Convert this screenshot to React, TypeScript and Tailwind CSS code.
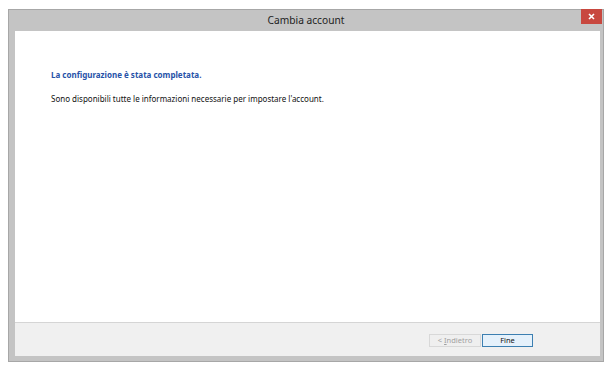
import React from "react";

export default function App() {
  return (
    <div className="w-[609px] h-[366px] bg-white pt-[9px] pl-[8px]" style={{ fontFamily: '"Noto Sans", "Open Sans", sans-serif' }}>
      <div className="w-[596px] h-[353px] border border-[#a7a7a7] bg-[#c4c4c4] flex flex-col">
        <div className="relative h-[21px] flex items-center justify-center shrink-0">
          <span className="text-[10.2px] text-[#222] leading-none">Cambia account</span>
          <div className="absolute right-[1px] top-[-1px] w-[21px] h-[15px] bg-[#c8483f] flex items-center justify-center">
            <svg width="7" height="7" viewBox="0 0 7 7">
              <path d="M1 1 L6 6 M6 1 L1 6" stroke="#fff" strokeWidth="1.6" />
            </svg>
          </div>
        </div>
        <div className="flex-1 flex flex-col pl-[6px] pr-[3px] pb-[5px]">
          <div className="flex-1 bg-white pl-[36px] pt-[40px]">
            <div className="text-[8px] font-bold text-[#2652a8] leading-none">La configurazione è stata completata.</div>
            <div className="text-[8px] text-[#111] leading-none mt-[16px]">
              Sono disponibili tutte le informazioni necessarie per impostare l'account.
            </div>
          </div>
          <div className="h-[34px] bg-[#f0f0f0] border-t border-[#d5d5d5] flex items-start justify-end pt-[11px] pr-[67px] gap-[1px]">
            <div className="w-[52px] h-[13px] border border-[#d8d8d8] bg-[#efefef] flex items-center justify-center text-[7.5px] text-[#a0a0a0] leading-none">
              &lt; <span className="underline ml-[2px]">I</span>ndietro
            </div>
            <div className="w-[51px] h-[13px] border border-[#3c7fb1] bg-[#e5f1fb] flex items-center justify-center text-[7.5px] text-[#111] leading-none">
              Fine
            </div>
          </div>
        </div>
      </div>
    </div>
  );
}
